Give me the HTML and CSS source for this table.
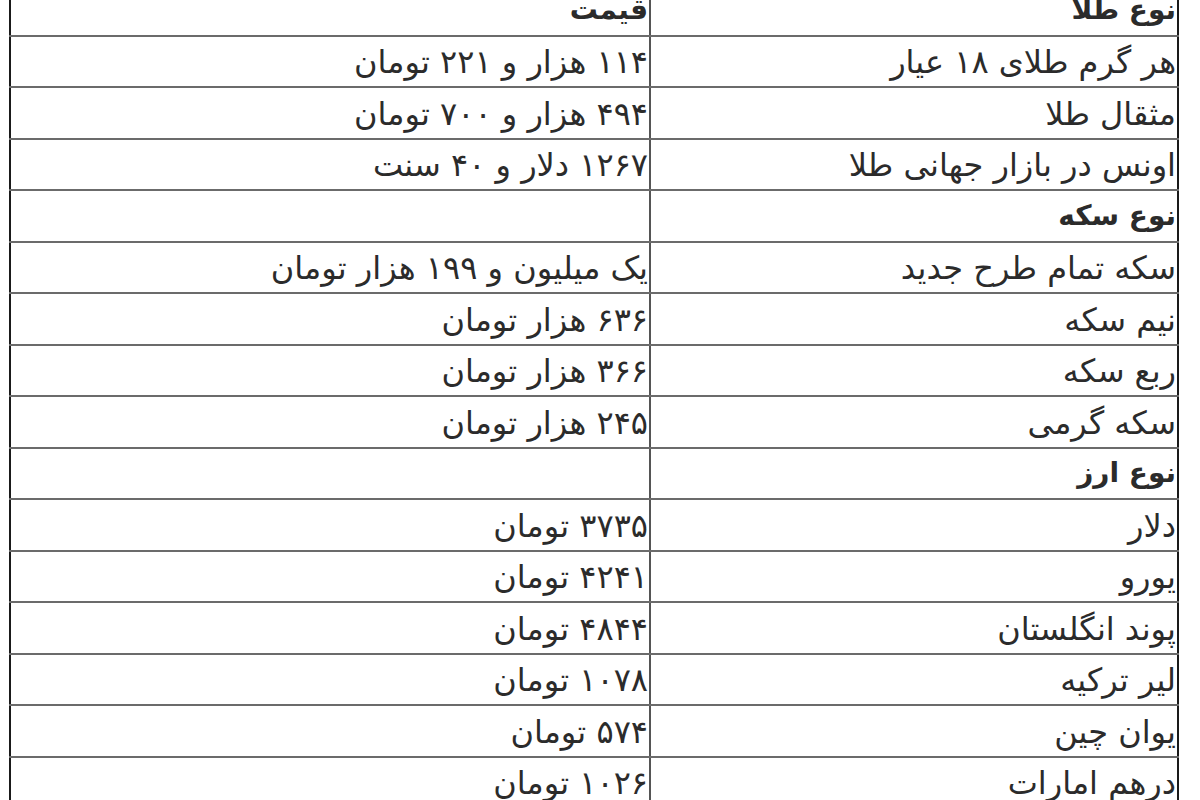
FILE: index.html
```html
<!DOCTYPE html>
<html lang="fa" dir="rtl">
<head>
<meta charset="utf-8">
<title>قیمت طلا و سکه و ارز</title>
<link rel="stylesheet" href="styles.css">
</head>
<body>
<table class="prices">
  <tbody>
    <tr><td class="name head">نوع طلا</td><td class="price head">قیمت</td></tr>
    <tr><td class="name">هر گرم طلای ۱۸ عیار</td><td class="price">۱۱۴ هزار و ۲۲۱ تومان</td></tr>
    <tr><td class="name">مثقال طلا</td><td class="price">۴۹۴ هزار و ۷۰۰ تومان</td></tr>
    <tr><td class="name">اونس در بازار جهانی طلا</td><td class="price">۱۲۶۷ دلار و ۴۰ سنت</td></tr>
    <tr><td class="name head">نوع سکه</td><td class="price"></td></tr>
    <tr><td class="name">سکه تمام طرح جدید</td><td class="price">یک میلیون و ۱۹۹ هزار تومان</td></tr>
    <tr><td class="name">نیم سکه</td><td class="price">۶۳۶ هزار تومان</td></tr>
    <tr><td class="name">ربع سکه</td><td class="price">۳۶۶ هزار تومان</td></tr>
    <tr><td class="name">سکه گرمی</td><td class="price">۲۴۵ هزار تومان</td></tr>
    <tr><td class="name head">نوع ارز</td><td class="price"></td></tr>
    <tr><td class="name">دلار</td><td class="price">۳۷۳۵ تومان</td></tr>
    <tr><td class="name">یورو</td><td class="price">۴۲۴۱ تومان</td></tr>
    <tr><td class="name">پوند انگلستان</td><td class="price">۴۸۴۴ تومان</td></tr>
    <tr><td class="name">لیر ترکیه</td><td class="price">۱۰۷۸ تومان</td></tr>
    <tr><td class="name">یوان چین</td><td class="price">۵۷۴ تومان</td></tr>
    <tr><td class="name">درهم امارات</td><td class="price">۱۰۲۶ تومان</td></tr>
  </tbody>
</table>
</body>
</html>
```

FILE: styles.css
```css
html, body {
  margin: 0;
  padding: 0;
  background: #ffffff;
}

body {
  font-family: "DejaVu Sans", sans-serif;
  color: #2b2b2b;
  overflow: hidden;
}

.prices {
  direction: rtl;
  border-collapse: collapse;
  width: 1170px;
  margin: -17px 21px 0 9px;
  table-layout: fixed;
  border-right: 2px solid #1a1a1a;
  border-left: 2px solid #1a1a1a;
}

.prices td {
  height: 51.5px;
  box-sizing: border-box;
  padding: 0 1px 4px 0;
  border-bottom: 2px solid #6b6b6b;
  border-top: 2px solid #6b6b6b;
  font-size: 32px;
  line-height: 40px;
  text-align: right;
  vertical-align: bottom;
  white-space: nowrap;
}

.prices .name {
  width: 528px;
  border-left: 2px solid #555555;
}

.prices .head {
  font-weight: bold;
  font-size: 28px;
  padding-bottom: 5px;
}
```
